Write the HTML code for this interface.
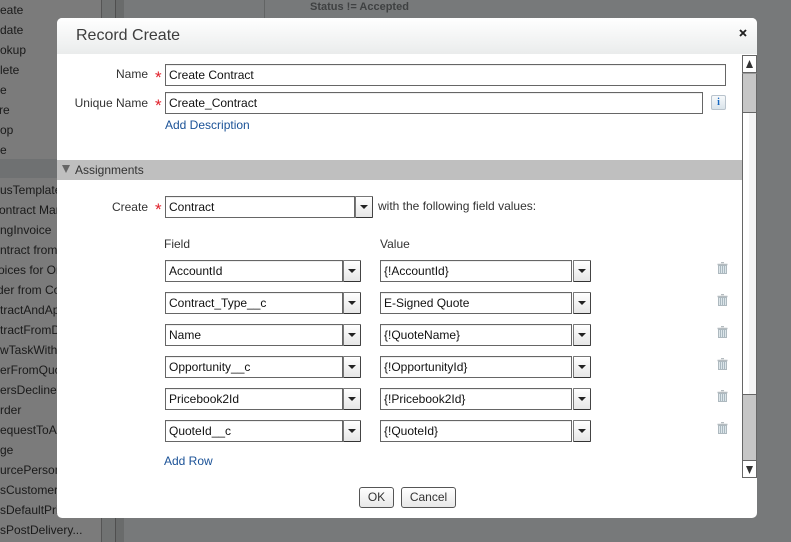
<!DOCTYPE html>
<html><head><meta charset="utf-8">
<style>
html,body{margin:0;padding:0;width:791px;height:542px;overflow:hidden;background:#77797a;font-family:"Liberation Sans",Arial,sans-serif;font-size:12px;color:#222}
.a{position:absolute;white-space:nowrap}
.side{left:0;top:0;width:101px;height:542px;background:#7b7b7b;overflow:hidden}
.side div{position:absolute;white-space:nowrap;font-size:12px;color:#1a1a1a;line-height:14px}
.side i{position:absolute;right:100%;font-style:normal}
.in{position:absolute;box-sizing:border-box;height:22px;border:1px solid #666;background:#fff;box-shadow:inset 0 1px 0 #eee;padding-left:3px;line-height:21px;font-size:12px;color:#111;white-space:nowrap}
.dd{position:absolute;box-sizing:border-box;width:18px;height:22px;border:1px solid #777;border-right-color:#444;border-bottom-color:#333;border-radius:1px;background:linear-gradient(#fff,#e6e6e6)}
.dd:after{content:"";position:absolute;left:4px;top:8px;border-left:4px solid transparent;border-right:4px solid transparent;border-top:4px solid #222}
.l{position:absolute;text-align:right;white-space:nowrap;line-height:14px;color:#333}
.s{position:absolute;color:#e0202a;font-size:17px;line-height:14px;font-weight:normal}
.lnk{position:absolute;color:#1b5297;white-space:nowrap;line-height:14px}
.btn{position:absolute;box-sizing:border-box;height:21px;top:487px;border:1px solid #555;border-radius:3px;background:linear-gradient(#fff,#e8e8e8);text-align:center;line-height:18px;font-size:12px;color:#333}
svg{position:absolute}
</style></head>
<body>
<div class="a side">
<div style="left:0;top:159px;width:101px;height:19px;background:#6f7172"></div>
<div style="left:0;top:3px"><i>Cr</i>eate</div>
<div style="left:0;top:23px"><i>Up</i>date</div>
<div style="left:0;top:43px"><i>Lo</i>okup</div>
<div style="left:0;top:63px"><i>De</i>lete</div>
<div style="left:0;top:83px"><i>Vot</i>e</div>
<div style="left:-1px;top:103px"><i>Sto</i>re</div>
<div style="left:0;top:123px"><i>Lo</i>op</div>
<div style="left:0;top:143px"><i>Dat</i>e</div>
<div style="left:0;top:183px"><i>Stat</i>usTemplate</div>
<div style="left:-1px;top:203px"><i>C</i>ontract Manager</div>
<div style="left:0;top:223px"><i>Billi</i>ngInvoice</div>
<div style="left:0;top:243px"><i>Co</i>ntract from Quote</div>
<div style="left:-2px;top:263px"><i>Inv</i>oices for Order</div>
<div style="left:-3px;top:283px"><i>Or</i>der from Contract</div>
<div style="left:0;top:303px"><i>Con</i>tractAndApproval</div>
<div style="left:0;top:323px"><i>Con</i>tractFromDeal</div>
<div style="left:0;top:343px"><i>Ne</i>wTaskWithRecord</div>
<div style="left:0;top:363px"><i>Ord</i>erFromQuote</div>
<div style="left:0;top:383px"><i>Ord</i>ersDeclined</div>
<div style="left:0;top:403px"><i>O</i>rder</div>
<div style="left:0;top:423px"><i>R</i>equestToApprove</div>
<div style="left:0;top:443px"><i>Sta</i>ge</div>
<div style="left:0;top:463px"><i>Reso</i>urcePerson</div>
<div style="left:0;top:483px"><i>I</i>sCustomerPortal</div>
<div style="left:0;top:503px"><i>I</i>sDefaultPrice</div>
<div style="left:0;top:523px"><i>I</i>sPostDelivery...</div>
</div>
<div class="a" style="left:101px;top:0;width:1px;height:542px;background:#555"></div>
<div class="a" style="left:102px;top:0;width:13px;height:542px;background:#707272"></div>
<div class="a" style="left:115px;top:0;width:1px;height:542px;background:#4f4f4f"></div>
<div class="a" style="left:116px;top:0;width:8px;height:542px;background:#696b6b"></div>
<div class="a" style="left:264px;top:0;width:1px;height:18px;background:#626464"></div>
<div class="a" style="left:310px;top:1px;font-size:11px;font-weight:bold;color:#3f4142;line-height:13px">Status != Accepted</div>

<!-- dialog -->
<div class="a" style="left:57px;top:18px;width:700px;height:500px;background:#fff;border-radius:5px;overflow:hidden">
  <div style="position:absolute;left:0;top:0;width:700px;height:36px;background:linear-gradient(#fff,#eaecec)"></div>
  <div style="position:absolute;left:19px;top:8px;font-size:16px;line-height:19px;color:#3d3d3d">Record Create</div>
  <svg style="left:682px;top:11px" width="8" height="8" viewBox="0 0 8 8"><path d="M1 1L7 7M7 1L1 7" stroke="#222" stroke-width="1.9"/></svg>
  <div style="position:absolute;left:0;top:142px;width:685px;height:20px;background:#bfbfbf"></div>
  <!-- scrollbar -->
  <div style="position:absolute;left:685px;top:37px;width:15px;height:423px;box-sizing:border-box;border:1px solid #666;background:linear-gradient(90deg,#fff 0,#fff 6px,#f4f4f4 6px,#f4f4f4 100%)"></div>
  <div style="position:absolute;left:685px;top:37px;width:15px;height:18px;box-sizing:border-box;border:1px solid #666;background:#fff"></div>
  <svg style="left:689px;top:42px" width="7" height="8" viewBox="0 0 7 8"><path d="M3.5 0L7 8H0Z" fill="#333"/></svg>
  <div style="position:absolute;left:685px;top:55px;width:15px;height:40px;box-sizing:border-box;border:1px solid #666;border-top:1px solid #999;background:#c6c6c6"></div>
  <div style="position:absolute;left:685px;top:376px;width:15px;height:67px;box-sizing:border-box;border:1px solid #666;background:#c6c6c6"></div>
  <div style="position:absolute;left:685px;top:442px;width:15px;height:18px;box-sizing:border-box;border:1px solid #666;background:#fff"></div>
  <svg style="left:689px;top:448px" width="7" height="8" viewBox="0 0 7 8"><path d="M0 0H7L3.5 8Z" fill="#333"/></svg>
</div>

<div class="l" style="right:643px;top:67px">Name</div>
<div class="s" style="left:155px;top:71px">*</div>
<div class="in" style="left:165px;top:64px;width:561px">Create Contract</div>
<div class="l" style="right:643px;top:96px">Unique Name</div>
<div class="s" style="left:155px;top:99px">*</div>
<div class="in" style="left:165px;top:92px;width:538px">Create_Contract</div>
<div class="a" style="left:711px;top:95px;width:15px;height:15px;box-sizing:border-box;border:1px solid #b9c3cc;border-radius:2px;background:linear-gradient(#f7fafc,#d9e3ea);color:#1566c0;font:bold 10px/13px 'Liberation Serif',serif;text-align:center">i</div>
<div class="lnk" style="left:165px;top:118px">Add Description</div>

<svg style="left:62px;top:165px" width="8" height="8" viewBox="0 0 8 8"><path d="M0 0H8L4 8Z" fill="#666"/></svg>
<div class="a" style="left:75px;top:163px;line-height:14px;color:#333">Assignments</div>

<div class="l" style="right:643px;top:200px">Create</div>
<div class="s" style="left:155px;top:203px">*</div>
<div class="in" style="left:165px;top:196px;width:190px">Contract</div>
<div class="dd" style="left:355px;top:196px"></div>
<div class="a" style="left:378px;top:199px;line-height:14px;color:#333">with the following field values:</div>
<div class="a" style="left:164px;top:237px;line-height:14px;color:#333">Field</div>
<div class="a" style="left:380px;top:237px;line-height:14px;color:#333">Value</div>

<div class="in" style="left:165px;top:260px;width:178px">AccountId</div><div class="dd" style="left:343px;top:260px"></div>
<div class="in" style="left:380px;top:260px;width:192px">{!AccountId}</div><div class="dd" style="left:573px;top:260px"></div>
<div class="in" style="left:165px;top:292px;width:178px">Contract_Type__c</div><div class="dd" style="left:343px;top:292px"></div>
<div class="in" style="left:380px;top:292px;width:192px">E-Signed Quote</div><div class="dd" style="left:573px;top:292px"></div>
<div class="in" style="left:165px;top:324px;width:178px">Name</div><div class="dd" style="left:343px;top:324px"></div>
<div class="in" style="left:380px;top:324px;width:192px">{!QuoteName}</div><div class="dd" style="left:573px;top:324px"></div>
<div class="in" style="left:165px;top:356px;width:178px">Opportunity__c</div><div class="dd" style="left:343px;top:356px"></div>
<div class="in" style="left:380px;top:356px;width:192px">{!OpportunityId}</div><div class="dd" style="left:573px;top:356px"></div>
<div class="in" style="left:165px;top:388px;width:178px">Pricebook2Id</div><div class="dd" style="left:343px;top:388px"></div>
<div class="in" style="left:380px;top:388px;width:192px">{!Pricebook2Id}</div><div class="dd" style="left:573px;top:388px"></div>
<div class="in" style="left:165px;top:420px;width:178px">QuoteId__c</div><div class="dd" style="left:343px;top:420px"></div>
<div class="in" style="left:380px;top:420px;width:192px">{!QuoteId}</div><div class="dd" style="left:573px;top:420px"></div>

<svg style="left:717px;top:262px" width="11" height="12" viewBox="0 0 11 12"><path d="M4 .5H7M.5 2.5H10.5" stroke="#b5bcc0" stroke-width="1.4" fill="none"/><rect x="1.5" y="3.5" width="8" height="8" fill="#dde6ea" stroke="#aeb9bf"/><path d="M3.5 4V11M5.5 4V11M7.5 4V11" stroke="#a9b8c0"/></svg>
<svg style="left:717px;top:294px" width="11" height="12" viewBox="0 0 11 12"><path d="M4 .5H7M.5 2.5H10.5" stroke="#b5bcc0" stroke-width="1.4" fill="none"/><rect x="1.5" y="3.5" width="8" height="8" fill="#dde6ea" stroke="#aeb9bf"/><path d="M3.5 4V11M5.5 4V11M7.5 4V11" stroke="#a9b8c0"/></svg>
<svg style="left:717px;top:326px" width="11" height="12" viewBox="0 0 11 12"><path d="M4 .5H7M.5 2.5H10.5" stroke="#b5bcc0" stroke-width="1.4" fill="none"/><rect x="1.5" y="3.5" width="8" height="8" fill="#dde6ea" stroke="#aeb9bf"/><path d="M3.5 4V11M5.5 4V11M7.5 4V11" stroke="#a9b8c0"/></svg>
<svg style="left:717px;top:358px" width="11" height="12" viewBox="0 0 11 12"><path d="M4 .5H7M.5 2.5H10.5" stroke="#b5bcc0" stroke-width="1.4" fill="none"/><rect x="1.5" y="3.5" width="8" height="8" fill="#dde6ea" stroke="#aeb9bf"/><path d="M3.5 4V11M5.5 4V11M7.5 4V11" stroke="#a9b8c0"/></svg>
<svg style="left:717px;top:390px" width="11" height="12" viewBox="0 0 11 12"><path d="M4 .5H7M.5 2.5H10.5" stroke="#b5bcc0" stroke-width="1.4" fill="none"/><rect x="1.5" y="3.5" width="8" height="8" fill="#dde6ea" stroke="#aeb9bf"/><path d="M3.5 4V11M5.5 4V11M7.5 4V11" stroke="#a9b8c0"/></svg>
<svg style="left:717px;top:422px" width="11" height="12" viewBox="0 0 11 12"><path d="M4 .5H7M.5 2.5H10.5" stroke="#b5bcc0" stroke-width="1.4" fill="none"/><rect x="1.5" y="3.5" width="8" height="8" fill="#dde6ea" stroke="#aeb9bf"/><path d="M3.5 4V11M5.5 4V11M7.5 4V11" stroke="#a9b8c0"/></svg>

<div class="lnk" style="left:164px;top:454px">Add Row</div>
<div class="btn" style="left:359px;width:35px">OK</div>
<div class="btn" style="left:401px;width:55px">Cancel</div>
</body></html>
